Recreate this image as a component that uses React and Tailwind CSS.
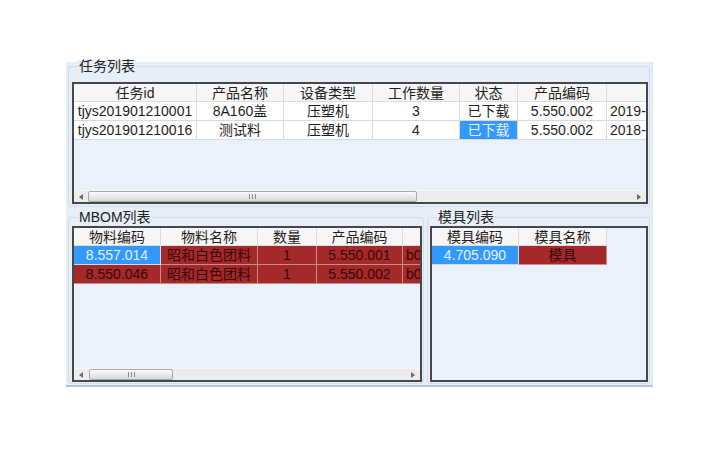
import React from 'react';

const TASK_COLS = [
  { w: 'w-[123px]', h: '任务id' },
  { w: 'w-[87px]', h: '产品名称' },
  { w: 'w-[89px]', h: '设备类型' },
  { w: 'w-[87px]', h: '工作数量' },
  { w: 'w-[58px]', h: '状态' },
  { w: 'w-[89px]', h: '产品编码' },
  { w: 'w-[120px]', h: '', left: true },
];

// last column runs past the visible edge; only the start of the date shows
const TASK_ROWS = [
  { cells: ['tjys201901210001', '8A160盖', '压塑机', '3', '已下载', '5.550.002', '2019-'] },
  { cells: ['tjys201901210016', '测试料', '压塑机', '4', '已下载', '5.550.002', '2018-'], blue: 4 },
];

const MBOM_COLS = [
  { w: 'w-[87px]', h: '物料编码' },
  { w: 'w-[97px]', h: '物料名称' },
  { w: 'w-[59px]', h: '数量' },
  { w: 'w-[86px]', h: '产品编码' },
  { w: 'w-[60px]', h: '', left: true },
];

const MBOM_ROWS = [
  { cells: ['8.557.014', '昭和白色团料', '1', '5.550.001', 'b0'], red: true, blue: 0 },
  { cells: ['8.550.046', '昭和白色团料', '1', '5.550.002', 'b0'], red: true },
];

const MOLD_COLS = [
  { w: 'w-[87px]', h: '模具编码' },
  { w: 'w-[88px]', h: '模具名称' },
];

const MOLD_ROWS = [{ cells: ['4.705.090', '模具'], red: true, blue: 0 }];

const tones = {
  plain: 'bg-white text-[#1e1e1e] border-[#d9d9d9]',
  blue: 'bg-[#3399ff] text-[#e3f1ff] border-[#d9d9d9]',
  red: 'bg-[#a3292a] text-[#3a0808] border-[#c98b8b]',
  head: 'bg-[#f6f6f6] text-[#1e1e1e] border-[#dcdcdc]',
};

const Cell = ({ col, tone, tall, children }) => (
  <div
    className={`${col.w} ${tall ? 'h-[19px] leading-[19px]' : 'h-[18px] leading-[18px]'} ${
      col.left ? 'text-left pl-[3px]' : 'text-center'
    } shrink-0 overflow-hidden whitespace-nowrap border-r border-b ${tones[tone]}`}
  >
    {children}
  </div>
);

const Arrow = ({ right }) => (
  <div className="w-[14px] h-full flex items-center justify-center">
    <svg width="4" height="6" viewBox="0 0 4 6">
      <polygon points={right ? '0,0 0,6 4,3' : '4,0 4,6 0,3'} fill="#6b6b6b" />
    </svg>
  </div>
);

const ScrollBar = ({ thumb }) => (
  <div className="h-[12px] shrink-0 flex items-center bg-[#ececec] border-t border-[#f6f6f6]">
    <Arrow />
    <div className="flex-1 h-full flex items-center">
      <div
        className={`${thumb} h-[11px] rounded-[2px] border border-[#a9a9a9] bg-gradient-to-b from-[#fbfbfb] to-[#d9d9d9] flex items-center justify-center`}
      >
        <svg width="7" height="5" viewBox="0 0 7 5">
          <rect x="0" y="0" width="1" height="5" fill="#8a8a8a" />
          <rect x="3" y="0" width="1" height="5" fill="#8a8a8a" />
          <rect x="6" y="0" width="1" height="5" fill="#8a8a8a" />
        </svg>
      </div>
    </div>
    <Arrow right />
  </div>
);

const Grid = ({ cols, rows, height, thumb }) => (
  <div className={`${height} flex flex-col border-2 border-[#474747] bg-[#eaf1fb] overflow-hidden`}>
    <div className="flex-1 overflow-hidden">
      <div className="flex">
        {cols.map((c, i) => (
          <Cell key={i} col={c} tone="head">
            {c.h}
          </Cell>
        ))}
      </div>
      {rows.map((r, ri) => (
        <div key={ri} className="flex">
          {r.cells.map((v, ci) => (
            <Cell key={ci} col={cols[ci]} tall tone={r.blue === ci ? 'blue' : r.red ? 'red' : 'plain'}>
              {v}
            </Cell>
          ))}
        </div>
      ))}
    </div>
    {thumb && <ScrollBar thumb={thumb} />}
  </div>
);

const Group = ({ label, className, children }) => (
  <div className={`relative border border-[#d2dded] rounded-[3px] ${className}`}>
    <div className="absolute left-[9px] top-[-7px] leading-[12px] px-[1px] bg-[#e8eef7] text-[#222]">
      {label}
    </div>
    {children}
  </div>
);

export default function App() {
  return (
    <div className="w-[720px] h-[450px] bg-white pt-[62px] pl-[66px] text-[14px] font-['Liberation_Sans','Noto_Sans_CJK_SC',sans-serif]">
      <div className="w-[587px] h-[325px] flex flex-col bg-[#e8eef7] border-b-2 border-r border-b-[#b3c6e0] border-r-[#dbe4f0] pt-[4px] pl-[2px] pr-[2px]">
        <Group label="任务列表" className="h-[141px] pt-[15px] pl-[3px] pr-[1px] pb-[2px]">
          <Grid cols={TASK_COLS} rows={TASK_ROWS} height="h-[122px]" thumb="w-[329px]" />
        </Group>
        <div className="mt-[10px] h-[167px] flex gap-[3px]">
          <Group label="MBOM列表" className="w-[356px] pt-[8px] pl-[3px] pr-[1px] pb-[1px]">
            <Grid cols={MBOM_COLS} rows={MBOM_ROWS} height="h-[156px]" thumb="ml-[1px] w-[84px]" />
          </Group>
          <Group label="模具列表" className="w-[223px] pt-[8px] pl-[2px] pr-[1px] pb-[1px]">
            <Grid cols={MOLD_COLS} rows={MOLD_ROWS} height="h-[156px]" />
          </Group>
        </div>
      </div>
    </div>
  );
}
